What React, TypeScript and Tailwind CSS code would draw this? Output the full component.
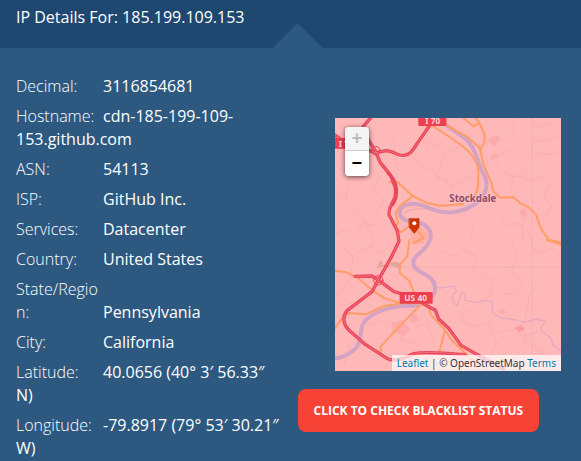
import React from "react";

const details: { label: string; value: string }[] = [
  { label: "Decimal:", value: "3116854681" },
  { label: "Hostname:", value: "cdn-185-199-109-153.github.com" },
  { label: "ASN:", value: "54113" },
  { label: "ISP:", value: "GitHub Inc." },
  { label: "Services:", value: "Datacenter" },
  { label: "Country:", value: "United States" },
  { label: "State/Region:", value: "Pennsylvania" },
  { label: "City:", value: "California" },
  { label: "Latitude:", value: "40.0656 (40° 3′ 56.33″ N)" },
  { label: "Longitude:", value: "-79.8917 (79° 53′ 30.21″ W)" },
];

const minorRoads = [
  "M15 160 C60 175 60 210 50 240 S90 290 120 350 S100 380 130 400",
  "M190 80 C200 110 190 140 205 170 M250 130 L270 160 L300 170 L330 200",
  "M280 85 L320 95 L350 140 M390 100 L340 130 L320 190 L370 220 L420 190",
  "M550 15 L552 50 L535 80 M600 15 L630 45 L660 30 M693 65 L645 85 L610 80",
  "M430 180 L470 150 L490 135 L540 110 L560 95 M490 135 L510 170 L550 190 L590 170",
  "M535 195 L570 190 L600 205 L640 190 M550 190 L540 240 M693 120 L640 125 L605 115",
  "M370 240 L350 200 L330 180 M400 300 L430 330 L420 380 M510 300 L530 340 L560 330 L590 350 L610 395",
  "M660 210 L640 250 L665 280 L640 320 M600 290 L575 330 L580 390",
  "M330 415 L370 430 L400 410 L440 430 L430 470 L490 500 L480 550 L440 570 L410 600",
  "M545 385 L560 430 L545 475 L580 510 L550 540 L510 545 M600 400 L640 420 L665 405 L693 425",
  "M630 510 L600 540 L590 600 L580 650 L590 700 M500 660 L540 650 L580 670 L640 650",
  "M410 590 L390 620 L430 640 L480 630 L500 690 L480 730 M600 690 L640 720 L650 760",
  "M30 400 L70 430 L60 500 L30 540 L15 550 M80 420 L120 400 L160 420 L180 390",
  "M90 580 L60 570 L30 590 M110 640 L150 620 L190 650 L160 680 M200 610 L230 640 L210 680 L250 690",
  "M20 360 L50 350 L70 370 L100 330 L150 340 M230 610 L260 640 L290 630 L310 680",
  "M150 190 L130 230 L160 260 L140 300 M50 240 L15 260 M30 680 L60 700 L40 760",
];

const river =
  "M340 30 L410 80 C440 110 440 145 460 182 C475 205 472 225 458 255 C430 280 390 300 350 298 C305 297 285 272 250 272 C220 272 204 290 210 306 C220 330 260 325 280 334 C308 350 306 375 294 392 C282 418 252 425 250 446 C248 474 285 480 300 494 C320 512 319 535 305 553 C280 585 240 576 200 581 C150 588 105 612 96 640 C88 670 95 695 70 712 C50 728 35 735 15 736";

const streams =
  "M330 525 L370 519 L380 535 L368 545 L370 570 L382 578 L394 540 L405 543 L405 562 L440 569 L470 562 L488 565 L486 596 L510 615 L560 621 L580 629 L620 618 L646 625 L634 640 L635 655 L662 675 L670 695 L693 715 M305 510 C315 526 323 525 333 523";

const orangeRoads = [
  "M178 207 L203 208 L247 248 L287 269 L333 278 L400 273",
  "M247 251 L209 279 L197 300 L204 330 L197 344 L213 358 L235 341 L252 340 L280 375 L250 390",
  "M310 40 L350 66 L397 99 C430 125 447 155 445 185 C445 220 443 240 432 250",
  "M345 35 L410 70 L450 105 L461 158 L484 208 L490 235 L511 254 L550 252 L571 271 L597 283 L618 305 L632 345 L655 380 L693 388",
  "M400 15 L430 40 L448 30 L437 15 M448 30 L464 65 L463 90 L450 110",
  "M15 474 L47 477 L83 495 L127 532 L164 556 L210 570 L276 571",
  "M238 381 L232 430 L209 455 L210 481 L238 504 L253 540",
  "M15 646 L42 607 L60 600 L108 604 L158 580 L220 570",
  "M276 571 L208 640 L153 700 L151 720",
  "M295 575 L302 605 L345 651 L364 680 L392 707 L420 735 L470 768",
  "M345 651 L327 720 M650 381 L693 394",
];

const redRoads = [
  "M122 15 L100 40 L111 73 L135 112 L151 149 L182 187 L196 224 C202 270 174 270 177 305 L202 354 L207 385 L183 434 L145 501 L126 536 L52 592 C34 613 42 638 57 652 L107 695 L172 737 C190 747 224 736 250 722 C285 714 350 720 405 725",
  "M15 66 L50 92 L137 119 L170 113 C205 119 198 129 222 127 C245 125 249 108 266 85 L302 33",
  "M75 490 L126 489 L145 501 L192 536 L260 555 L285 575 L316 592 L326 618 L356 646 L393 697 L430 718 L520 768",
];

function RoadMap() {
  return (
    <svg
      viewBox="15 15 678 759"
      preserveAspectRatio="xMidYMid slice"
      className="absolute inset-0 block h-full w-full"
      fill="none"
      strokeLinejoin="round"
      strokeLinecap="round"
      aria-hidden="true"
    >
      <rect x="15" y="15" width="678" height="759" fill="#ffb8b8" />
      <g stroke="#f9abb0" strokeWidth="2.5">
        {minorRoads.map((d) => (
          <path key={d} d={d} />
        ))}
      </g>
      <g fill="#fbabae">
        <path d="M470 80 L500 65 L512 80 L490 100 Z M480 125 L500 120 L505 135 L485 140 Z" />
        <path d="M185 630 L215 620 L240 650 L220 670 L190 655 Z M240 605 L260 600 L265 625 L245 630 Z" />
        <path d="M505 590 L520 587 L530 600 L510 603 Z M570 290 L590 285 L588 310 L572 312 Z" />
      </g>
      <path d="M553 645 L572 635 L585 648 L567 658 Z" fill="#f69da2" />
      <path d="M238 345 L270 340 L297 365 L280 392 L245 392 Z" fill="#ffad9f" />
      <path
        d="M150 442 L160 449 L155 455 L182 455 L180 447 L200 446 L215 455 L210 471 L190 459 L160 461 L140 466 Z"
        fill="#dfa795"
      />
      <path d="M607 15 V774 M170 463 H693" stroke="#edacb1" strokeWidth="2" />
      <path d={streams} stroke="#e3abc0" strokeWidth="4" />
      <path d={river} stroke="#d4a2c2" strokeWidth="12" />
      <path d="M222 300 Q250 282 292 289" stroke="#d597a5" strokeWidth="2" strokeDasharray="4 4" />
      <g stroke="#ff9d67" strokeWidth="6">
        {orangeRoads.map((d) => (
          <path key={d} d={d} />
        ))}
      </g>
      <g stroke="#ea4659" strokeWidth="10">
        {redRoads.map((d) => (
          <path key={d} d={d} />
        ))}
      </g>
      <g stroke="#f36c7b" strokeWidth="3">
        {redRoads.map((d) => (
          <path key={d} d={d} />
        ))}
      </g>
      <path d="M174 180 C205 205 206 250 188 275" stroke="#ea4659" strokeWidth="9" />
      <g stroke="#ea4659" strokeWidth="3">
        <circle cx="137" cy="113" r="13" />
        <circle cx="145" cy="502" r="14" />
      </g>
      <g fill="#ee3e50">
        <rect x="265" y="5" width="84" height="34" rx="3" />
        <rect x="5" y="75" width="60" height="32" rx="3" />
        <rect x="209" y="537" width="99" height="35" rx="3" />
      </g>
      <g fill="#ffd5d8" fontFamily="Noto Sans, sans-serif" fontWeight="700" fontSize="25">
        <text x="286" y="33">I 70</text>
        <text x="26" y="101">I 70</text>
        <text x="223" y="564">US 40</text>
      </g>
      <text
        x="358"
        y="267"
        fill="#8d4c66"
        stroke="#ffc4c4"
        strokeWidth="4"
        paintOrder="stroke"
        fontFamily="Noto Sans, sans-serif"
        fontWeight="700"
        fontSize="29"
      >
        Stockdale
      </text>
      <path d="M238 317 H267 V343 L253 361 L238 343 Z" fill="#d13400" stroke="#a92a0b" strokeWidth="2" />
      <circle cx="253" cy="331" r="6" fill="#fff" />
    </svg>
  );
}

export default function App() {
  return (
    <main className="min-h-screen bg-[#2d5980] font-['Open_Sans',sans-serif] text-base text-white">
      <header className="relative h-12 bg-[#1f4870] px-4 pt-1.5">
        <h1 className="leading-[23px]">IP Details For: 185.199.109.153</h1>
        <span className="absolute bottom-0 left-1/2 -ml-[18px] h-[25px] w-[50px] bg-[#2d5980] [clip-path:polygon(50%_0,100%_100%,0_100%)]" />
      </header>

      <div className="grid grid-cols-2 gap-3.5 px-4">
        <dl className="flex flex-col gap-[7px] pt-[27px] leading-[23px]">
          {details.map(({ label, value }) => (
            <div key={label}>
              <dt className="mr-1 inline-block w-[83px] font-light break-all">{label}</dt>
              <dd className="inline font-medium">{value}</dd>
            </div>
          ))}
        </dl>

        <section className="flex flex-col items-start pt-[70px]">
          <div className="relative mr-1 h-[253px] w-[226px] self-end overflow-hidden">
            <RoadMap />
            <div className="absolute top-[9px] left-[10px] flex flex-col overflow-hidden rounded-sm font-['Liberation_Mono',monospace] text-lg font-bold shadow-[0_1px_5px_rgba(0,0,0,0.65)]">
              <button
                type="button"
                aria-label="Zoom in"
                disabled
                className="flex h-6 w-6 items-center justify-center border-b border-[#ccc] bg-[#f4f4f4] leading-6 text-[#bbb]"
              >
                +
              </button>
              <button
                type="button"
                aria-label="Zoom out"
                className="flex h-[25px] w-6 items-center justify-center bg-white leading-6 text-black"
              >
                −
              </button>
            </div>
            <div className="absolute right-0 bottom-0 bg-white/70 px-[5px] font-['Noto_Sans',sans-serif] text-[10px] leading-4 whitespace-nowrap text-[#333]">
              <a href="#leaflet" className="text-[#0078a8]">Leaflet</a>
              {" | © OpenStreetMap "}
              <a href="#terms" className="text-[#0078a8]">Terms</a>
            </div>
          </div>
          <button
            type="button"
            className="mt-[18px] h-[43px] rounded-lg bg-[#f64336] px-4 text-xs font-bold whitespace-nowrap"
          >
            CLICK TO CHECK BLACKLIST STATUS
          </button>
        </section>
      </div>
    </main>
  );
}
